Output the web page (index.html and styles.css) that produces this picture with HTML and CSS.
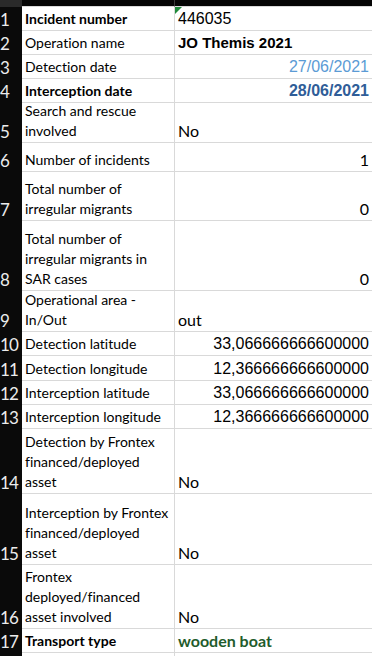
FILE: index.html
```html
<!DOCTYPE html>
<html>
<head>
<meta charset="utf-8">
<link rel="stylesheet" href="styles.css">
</head>
<body>
<div class="sheet">
  <div class="row head"><div class="num corner"></div><div class="label"></div><div class="val"></div></div>

  <div class="row h24"><div class="num">1</div><div class="label b">Incident number</div><div class="val ind"><span class="tri"></span><span class="arial">446035</span></div></div>
  <div class="row h24"><div class="num">2</div><div class="label">Operation name</div><div class="val"><span class="arialb">JO Themis 2021</span></div></div>
  <div class="row h24"><div class="num">3</div><div class="label">Detection date</div><div class="val r"><span class="arial light">27/06/2021</span></div></div>
  <div class="row h24"><div class="num">4</div><div class="label b">Interception date</div><div class="val r"><span class="arialb dark">28/06/2021</span></div></div>
  <div class="row h40"><div class="num">5</div><div class="label">Search and rescue<br>involved</div><div class="val">No</div></div>
  <div class="row h29"><div class="num">6</div><div class="label">Number of incidents</div><div class="val r">1</div></div>
  <div class="row h49"><div class="num">7</div><div class="label">Total number of<br>irregular migrants</div><div class="val r">0</div></div>
  <div class="row h70"><div class="num">8</div><div class="label">Total number of<br>irregular migrants in<br>SAR cases</div><div class="val r">0</div></div>
  <div class="row h41"><div class="num">9</div><div class="label">Operational area -<br>In/Out</div><div class="val">out</div></div>
  <div class="row h24"><div class="num">10</div><div class="label">Detection latitude</div><div class="val r"><span class="arial">33,066666666600000</span></div></div>
  <div class="row h25"><div class="num">11</div><div class="label">Detection longitude</div><div class="val r"><span class="arial">12,366666666600000</span></div></div>
  <div class="row h24"><div class="num">12</div><div class="label">Interception latitude</div><div class="val r"><span class="arial">33,066666666600000</span></div></div>
  <div class="row h24"><div class="num">13</div><div class="label">Interception longitude</div><div class="val r"><span class="arial">12,366666666600000</span></div></div>
  <div class="row h65"><div class="num">14</div><div class="label">Detection by Frontex<br>financed/deployed<br>asset</div><div class="val">No</div></div>
  <div class="row h71"><div class="num">15</div><div class="label">Interception by Frontex<br>financed/deployed<br>asset</div><div class="val">No</div></div>
  <div class="row h64"><div class="num">16</div><div class="label">Frontex<br>deployed/financed<br>asset involved</div><div class="val">No</div></div>
  <div class="row h24"><div class="num">17</div><div class="label b">Transport type</div><div class="val green">wooden boat</div></div>
  <div class="row h24"><div class="num"></div><div class="label"></div><div class="val"></div></div>
</div>
</body>
</html>
```

FILE: styles.css
```css
html, body {
  margin: 0;
  padding: 0;
  background: #ffffff;
  overflow: hidden;
}
.sheet {
  width: 372px;
  font-family: "Lato", "Noto Sans", sans-serif;
  font-variant-ligatures: none;
  color: #000;
}
.row {
  display: grid;
  grid-template-columns: 22px 153px 197px;
  box-sizing: border-box;
}
.row > div {
  box-sizing: border-box;
  display: flex;
  align-items: flex-end;
  white-space: nowrap;
  overflow: hidden;
}
.head { height: 7px; background: #050505; }
.head > div { background: #050505; }
.head .corner { background: #2a2a2a; }
.head .label { border-right: 1px solid #3a3a3a; }
.num {
  background: #0a0a0a;
  color: #ececec;
  font-size: 17px;
  line-height: 20px;
  padding: 0 0 1px 0;
  letter-spacing: -0.8px;
}
.label {
  border-bottom: 1px solid #d9d9d9;
  border-right: 1px solid #d9d9d9;
  padding: 0 2px 1px 3px;
  font-size: 14px;
  line-height: 20px;
}
.label.b { font-weight: 700; }
.val {
  position: relative;
  border-bottom: 1px solid #d9d9d9;
  padding: 0 3px 1px 3px;
  font-size: 16px;
  line-height: 20px;
}
.val.r { justify-content: flex-end; }
.arial { font-family: "Liberation Sans", Arial, sans-serif; font-size: 16px; }
.arialb { font-family: "Liberation Sans", Arial, sans-serif; font-size: 15px; font-weight: 700; }
.light { color: #5b9bd5; }
.dark { color: #2f5d98; font-size: 16px; }
.green { color: #1f5c2c; font-weight: 700; }
.tri {
  position: absolute;
  top: 0;
  left: 0;
  width: 0;
  height: 0;
  border-top: 7px solid #1e8a3a;
  border-right: 7px solid transparent;
}
.h24 { height: 24px; }
.h25 { height: 25px; }
.h29 { height: 29px; }
.h40 { height: 40px; }
.h41 { height: 41px; }
.h49 { height: 49px; }
.h64 { height: 64px; }
.h65 { height: 65px; }
.h70 { height: 70px; }
.h71 { height: 71px; }
```
